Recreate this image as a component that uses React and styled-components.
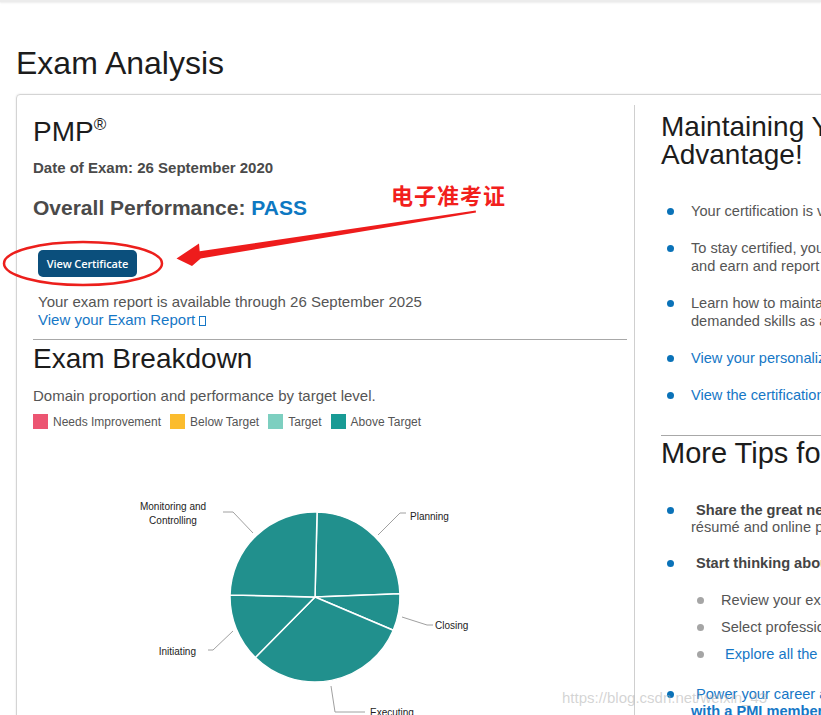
import React from "react";
import styled, { createGlobalStyle } from "styled-components";

const GlobalStyle = createGlobalStyle`
  html, body {
    margin: 0;
    padding: 0;
    background: #fff;
    overflow: hidden;
  }
  body {
    font-family: "Liberation Sans", Arial, sans-serif;
    color: #555;
  }
`;

const domains = [
  { name: "Planning", pct: 24 },
  { name: "Closing", pct: 7 },
  { name: "Executing", pct: 31 },
  { name: "Initiating", pct: 13 },
  { name: "Monitoring and Controlling", pct: 25 },
];

const legend = [
  { label: "Needs Improvement", color: "#ec5572" },
  { label: "Below Target", color: "#fbbc2e" },
  { label: "Target", color: "#7dcfc0" },
  { label: "Above Target", color: "#189b95" },
];

const Page = styled.div`
  position: relative;
  width: 821px;
  height: 715px;
  overflow: hidden;
`;

const TopBar = styled.div`
  height: 2px;
  background: #ececec;
  box-shadow: 0 1px 2px rgba(0, 0, 0, 0.08);
`;

const Main = styled.main`
  padding: 42px 0 0 16px;
`;

const Title = styled.h1`
  margin: 0 0 12px;
  font-size: 32px;
  line-height: 38px;
  font-weight: 400;
  color: #1c1c1c;
`;

const Card = styled.section`
  display: flex;
  width: 1200px;
  height: 700px;
  padding-top: 10px;
  border: 1px solid #d4d4d4;
  border-radius: 4px;
  box-shadow: 0 0 2px rgba(0, 0, 0, 0.12);
`;

const LeftCol = styled.div`
  box-sizing: border-box;
  width: 617px;
  flex-shrink: 0;
  padding: 11px 7px 0 16px;
`;

const RightCol = styled.div`
  width: 520px;
  border-left: 1px solid #cfcfcf;
  padding: 8px 0 0 26px;
`;

const Heading = styled.h2`
  margin: ${(p) => p.$mt || 0}px 0 0;
  font-size: ${(p) => p.$size || 28}px;
  line-height: ${(p) => p.$lh || 32}px;
  font-weight: 400;
  color: #1c1c1c;
  white-space: nowrap;
  sup {
    font-size: 17px;
    line-height: 0;
    vertical-align: 11px;
  }
`;

const ExamDate = styled.div`
  margin-top: 11px;
  font-size: 15px;
  line-height: 18px;
  font-weight: 700;
  color: #4a4a4a;
`;

const Performance = styled.div`
  margin-top: 19px;
  font-size: 21px;
  line-height: 24px;
  font-weight: 700;
  color: #4a4a4a;
  span {
    color: #0d78c2;
  }
`;

const CertButton = styled.button`
  display: block;
  margin: 30px 0 0 5px;
  width: 99px;
  height: 27px;
  padding: 0;
  border: none;
  border-radius: 5px;
  background: #0b4f7c;
  color: #fff;
  font-family: "Open Sans", "Liberation Sans", sans-serif;
  font-size: 11px;
  font-weight: 600;
  letter-spacing: -0.1px;
`;

const ReportInfo = styled.div`
  margin: 16px 0 0 5px;
  font-size: 15px;
  line-height: 18px;
  color: #555;
`;

const Link = styled.a`
  color: #1677c6;
  text-decoration: none;
  font-weight: ${(p) => (p.$bold ? 700 : 400)};
`;

const ExtBox = styled.span`
  display: inline-block;
  width: 5px;
  height: 8px;
  margin-left: 4px;
  border: 1px solid currentColor;
  vertical-align: -1px;
`;

const Rule = styled.hr`
  margin: ${(p) => p.$mt}px 0 ${(p) => p.$mb}px;
  border: none;
  border-top: 1px solid #a8a8a8;
  height: 0;
`;

const Intro = styled.p`
  margin: 12px 0 0;
  font-size: 15px;
  line-height: 18px;
  color: #555;
`;

const Legend = styled.div`
  display: flex;
  align-items: center;
  margin-top: 9px;
  height: 15px;
`;

const LegendItem = styled.div`
  display: flex;
  align-items: center;
  margin-right: 9px;
  font-size: 12px;
  color: #555;
`;

const Swatch = styled.span`
  width: 15px;
  height: 15px;
  margin-right: 5px;
  background: ${(p) => p.$color};
`;

const Chart = styled.svg`
  display: block;
  margin-top: 11px;
  overflow: visible;
  text {
    font-family: "Liberation Sans", Arial, sans-serif;
    font-size: 10px;
    fill: #222;
  }
`;

const List = styled.ul`
  margin: ${(p) => p.$mt || 0}px 0 0 ${(p) => p.$ml || 0}px;
  padding: 0;
  list-style: none;
  font-size: 14.6px;
  line-height: ${(p) => p.$lh}px;
  color: #555;
`;

const Item = styled.li`
  display: flex;
  align-items: flex-start;
  margin-top: ${(p) => p.$gap || 0}px;
  white-space: nowrap;
`;

const Dot = styled.span`
  flex-shrink: 0;
  width: 7px;
  height: 7px;
  border-radius: 50%;
  margin: ${(p) => p.$top}px 17px 0 6px;
  background: ${(p) => (p.$sub ? "#a5a5a5" : "#0a72b8")};
`;

const Lead = styled.span`
  padding-left: ${(p) => p.$pad || 5}px;
  font-weight: ${(p) => (p.$bold ? 700 : 400)};
  color: ${(p) => (p.$bold ? "#444" : "inherit")};
`;

const Annotation = styled.svg`
  position: absolute;
  left: 0;
  top: 0;
  pointer-events: none;
`;

const Callout = styled.div`
  position: absolute;
  left: 391px;
  top: 183px;
  font-family: "Noto Sans CJK SC", sans-serif;
  font-size: 22px;
  line-height: 22px;
  font-weight: 700;
  letter-spacing: 1px;
  color: #f2201c;
`;

const Watermark = styled.div`
  position: absolute;
  left: 562px;
  top: 689px;
  font-size: 15px;
  color: rgba(175, 175, 175, 0.55);
  white-space: nowrap;
`;

function slicePath(cx, cy, r, a0, a1) {
  const rad = (d) => (d * Math.PI) / 180;
  const x0 = cx + r * Math.cos(rad(a0));
  const y0 = cy + r * Math.sin(rad(a0));
  const x1 = cx + r * Math.cos(rad(a1));
  const y1 = cy + r * Math.sin(rad(a1));
  const large = a1 - a0 > 180 ? 1 : 0;
  return `M${cx},${cy} L${x0},${y0} A${r},${r} 0 ${large} 1 ${x1},${y1} Z`;
}

function PieChart() {
  let angle = -88.6;
  const slices = domains.map((d) => {
    const a0 = angle;
    angle += (d.pct / 100) * 360;
    return { ...d, path: slicePath(282, 157, 85, a0, angle) };
  });

  return (
    <Chart width="594" height="290" viewBox="0 0 594 290">
      {slices.map((s) => (
        <path key={s.name} d={s.path} fill="#21908d" stroke="#fff" strokeWidth="1.5" />
      ))}
      <g fill="none" stroke="#a0a0a0" strokeWidth="1">
        <polyline points="345,95 367,73 373,73" />
        <polyline points="369,177 394,185 400,185" />
        <polyline points="298,246 302,272 332,272" />
        <polyline points="200,191 180,210 175,210" />
        <polyline points="220,93 200,72 190,72" />
      </g>
      <text x="377" y="79.5">Planning</text>
      <text x="402" y="189">Closing</text>
      <text x="337" y="275.5">Executing</text>
      <text x="163" y="214.5" textAnchor="end">Initiating</text>
      <text x="140" y="69.5" textAnchor="middle">Monitoring and</text>
      <text x="140" y="83.5" textAnchor="middle">Controlling</text>
    </Chart>
  );
}

export default function App() {
  return (
    <Page>
      <GlobalStyle />
      <TopBar />
      <Main>
        <Title>Exam Analysis</Title>
        <Card>
          <LeftCol>
            <Heading>
              PMP<sup>®</sup>
            </Heading>
            <ExamDate>Date of Exam: 26 September 2020</ExamDate>
            <Performance>
              Overall Performance: <span>PASS</span>
            </Performance>
            <CertButton>View Certificate</CertButton>
            <ReportInfo>
              Your exam report is available through 26 September 2025
              <br />
              <Link href="#">
                View your Exam Report
                <ExtBox />
              </Link>
            </ReportInfo>
            <Rule $mt={10} $mb={3} />
            <Heading>Exam Breakdown</Heading>
            <Intro>Domain proportion and performance by target level.</Intro>
            <Legend>
              {legend.map((l) => (
                <LegendItem key={l.label}>
                  <Swatch $color={l.color} />
                  {l.label}
                </LegendItem>
              ))}
            </Legend>
            <PieChart />
          </LeftCol>

          <RightCol>
            <Heading $lh={28}>
              Maintaining Your Certification
              <br />
              Advantage!
            </Heading>
            <List $mt={33} $lh={18}>
              <Item>
                <Dot $top={6} />
                <span>Your certification is valid through 26 September 2023.</span>
              </Item>
              <Item $gap={19}>
                <Dot $top={6} />
                <span>
                  To stay certified, you must participate in professional development activities
                  <br />
                  and earn and report 60 professional development units (PDUs).
                </span>
              </Item>
              <Item $gap={19}>
                <Dot $top={6} />
                <span>
                  Learn how to maintain your certification while building the most in-
                  <br />
                  demanded skills as a project professional.
                </span>
              </Item>
              <Item $gap={19}>
                <Dot $top={6} />
                <Link href="#">View your personalized certification dashboard</Link>
              </Item>
              <Item $gap={19}>
                <Dot $top={6} />
                <Link href="#">View the certification handbook</Link>
              </Item>
            </List>
            <Rule $mt={31} $mb={1} />
            <Heading $size={29}>More Tips for Your Next Steps</Heading>
            <List $mt={33} $lh={17}>
              <Item>
                <Dot $top={5} />
                <span>
                  <Lead $bold>Share the great news!</Lead> Add your certification to your
                  <br />
                  résumé and online profiles.
                </span>
              </Item>
              <Item $gap={19}>
                <Dot $top={5} />
                <div>
                  <Lead $bold>Start thinking about your professional development.</Lead>
                  <List $mt={20} $ml={0} $lh={17}>
                    <Item>
                      <Dot $top={5} $sub />
                      <span>Review your exam report to identify areas to improve.</span>
                    </Item>
                    <Item $gap={10}>
                      <Dot $top={5} $sub />
                      <span>Select professional development activities.</span>
                    </Item>
                    <Item $gap={10}>
                      <Dot $top={5} $sub />
                      <Link href="#">
                        <Lead $pad={4}>Explore all the PDU opportunities</Lead>
                      </Link>
                    </Item>
                  </List>
                </div>
              </Item>
              <Item $gap={23}>
                <Dot $top={5} />
                <Link href="#" $bold>
                  <Lead>Power your career and save on renewal fees</Lead>
                  <br />
                  with a PMI membership.
                </Link>
              </Item>
            </List>
          </RightCol>
        </Card>
      </Main>

      <Annotation width="821" height="715" viewBox="0 0 821 715">
        <ellipse cx="83" cy="263.5" rx="79" ry="21.5" fill="none" stroke="#ec1f1c" strokeWidth="2.5" />
        <polygon
          points="475.7,210.4 476,212.6 200.7,258.4 192,266 176.5,258.5 199,243.5 199.7,251.2"
          fill="#ee1c1c"
        />
      </Annotation>
      <Callout>电子准考证</Callout>
      <Watermark>https://blog.csdn.net/weixin_43</Watermark>
    </Page>
  );
}
